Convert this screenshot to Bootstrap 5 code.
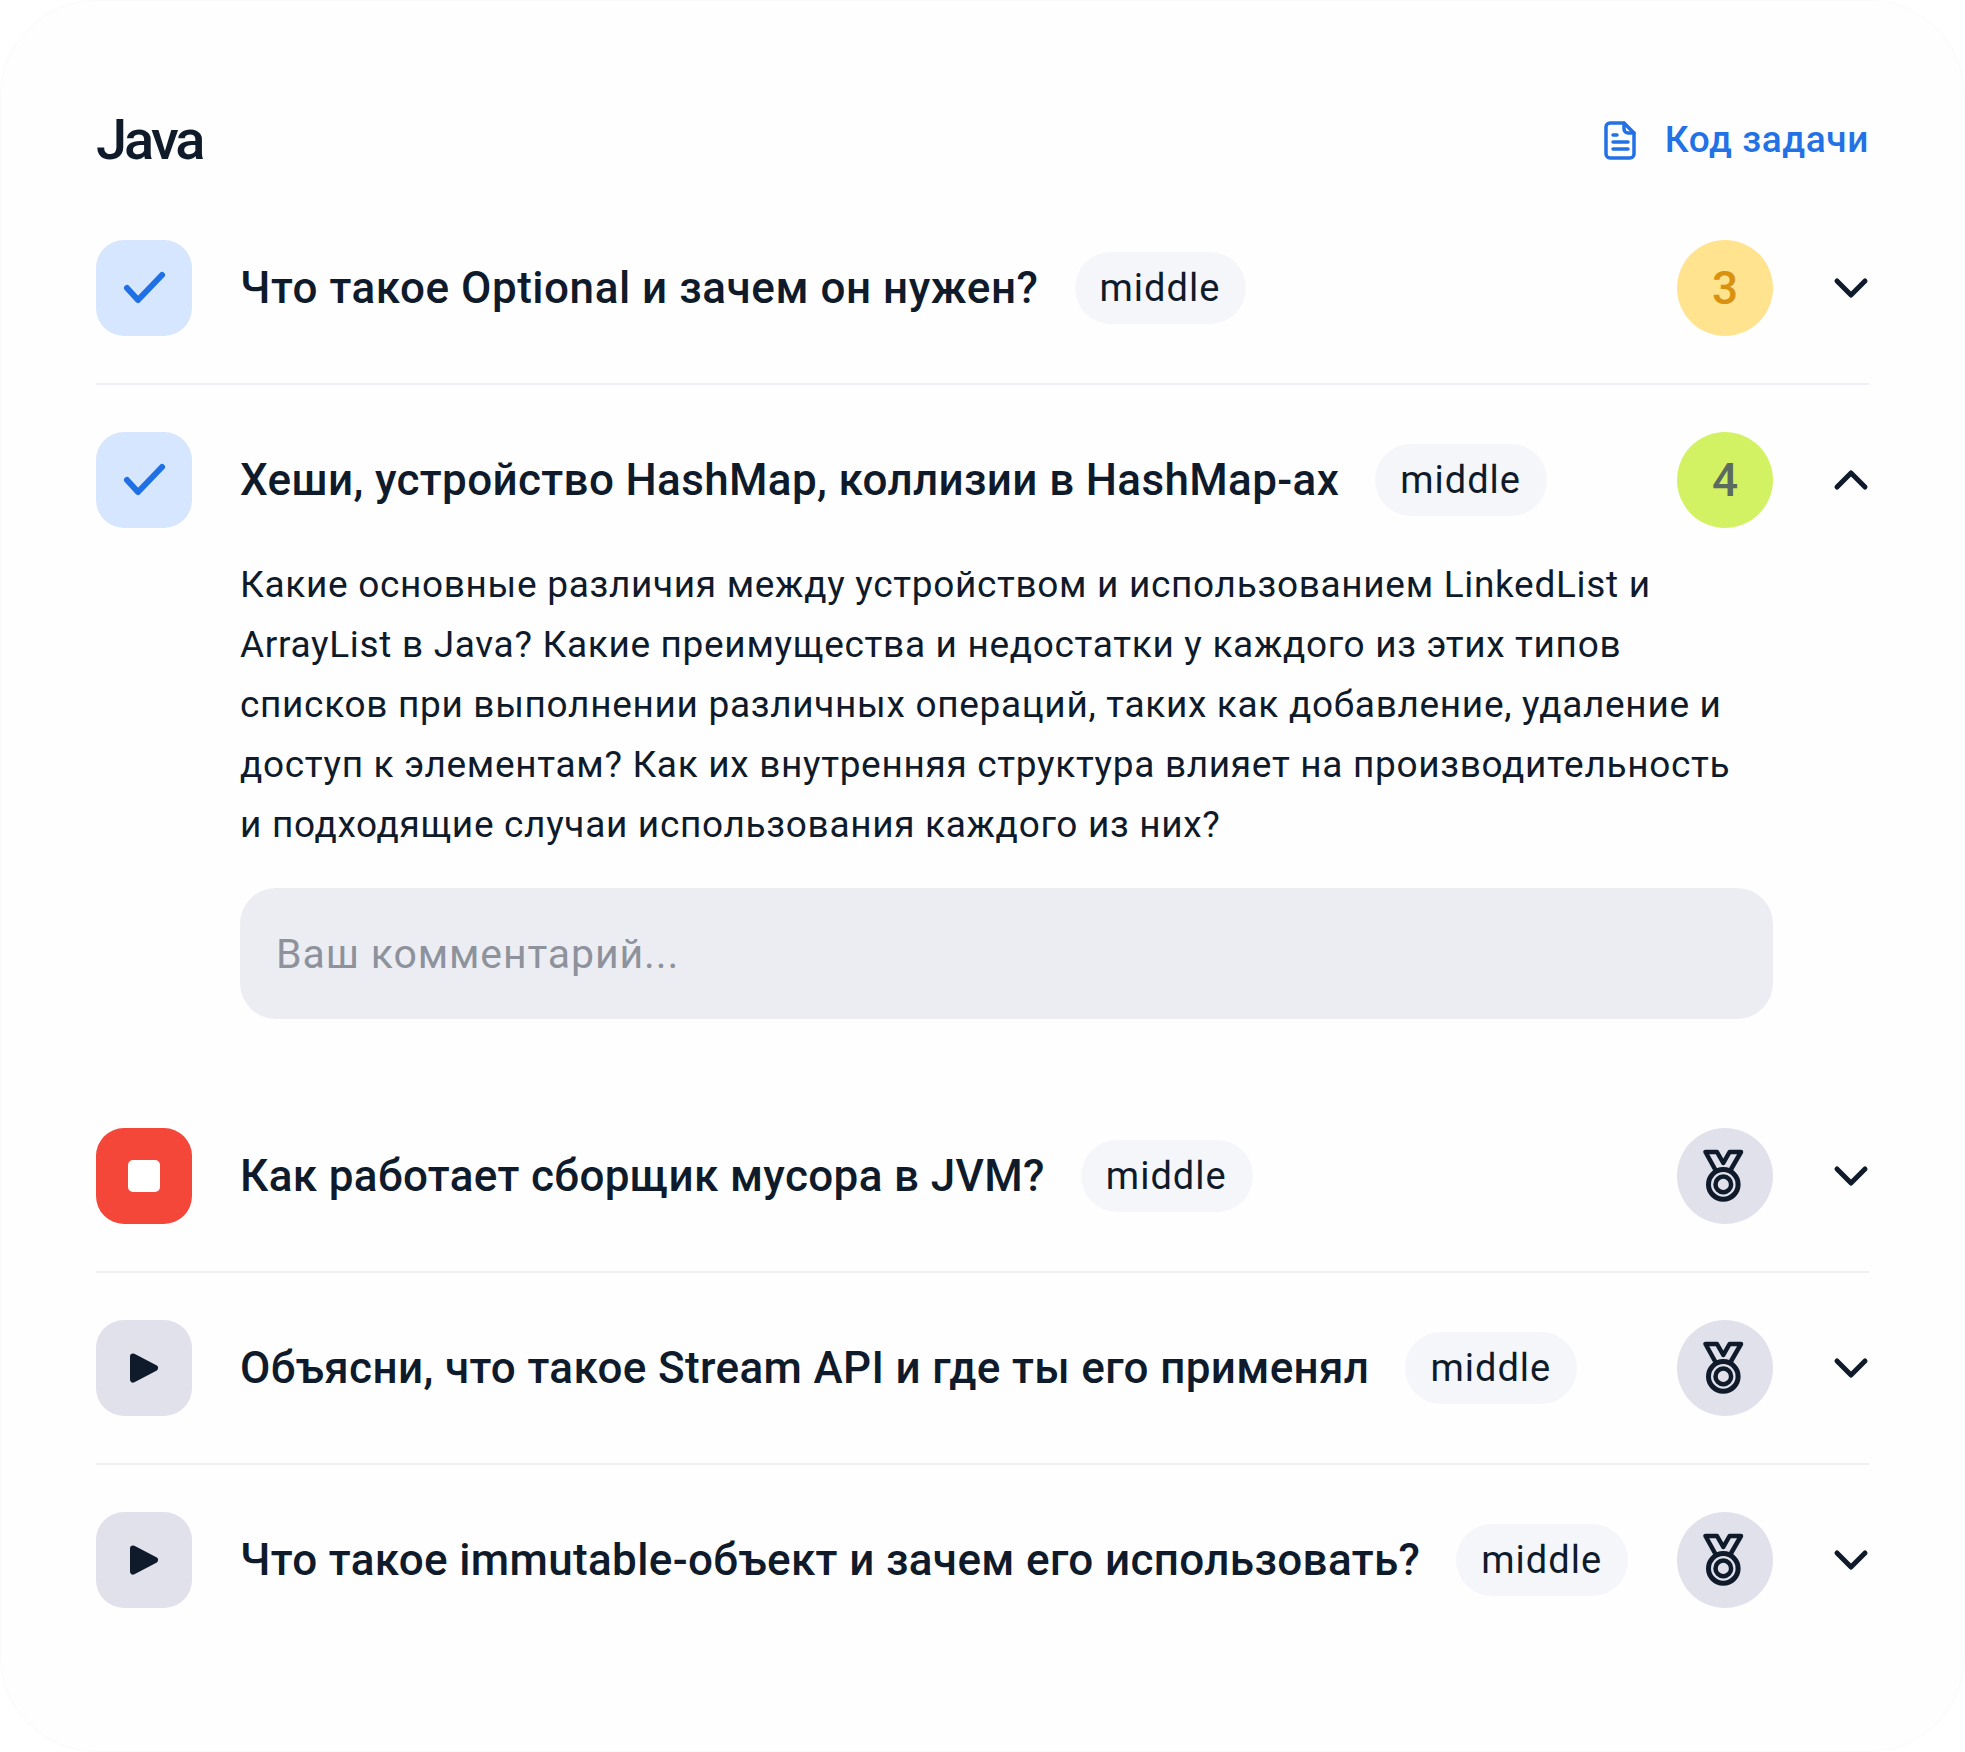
<!DOCTYPE html>
<html lang="ru">
<head>
<meta charset="utf-8">
<title>Java</title>
<link rel="stylesheet" href="https://cdn.jsdelivr.net/npm/bootstrap@5.3.0/dist/css/bootstrap.min.css">
<style>
body { background: #fff; font-family: Roboto, "Noto Sans", sans-serif; color: #0f1b2a; }
.sheet { height: 1752px; padding: 95px 95px 0; background: #fefefe; border: 1px solid #fafafa; border-radius: 96px; }
.sheet-head { height: 88px; margin-bottom: 56px; }
.sheet-title { font-size: 56px; font-weight: 500; letter-spacing: -3px; line-height: 88px; margin: 0; color: #0f1b2a; }
.code-link { color: #2272e6; font-size: 37px; font-weight: 500; letter-spacing: .6px; text-decoration: none; gap: 29px; }
.task-row { height: 96px; }
.task-sep { border-bottom: 2px solid #eff0f5; padding-bottom: 47px; margin-bottom: 47px; }
.task-last-open { margin-bottom: 109px; }
.state { width: 96px; height: 96px; border-radius: 28px; flex: none; margin-right: 48px; }
.state-done { background: #d6e6ff; }
.state-stop { background: #f44639; }
.state-play { background: #e0e1ea; }
.task-name { font-size: 44px; font-weight: 500; letter-spacing: .36px; margin: 0; line-height: 56px; white-space: nowrap; }
.task-name-wide { letter-spacing: .54px; }
.lvl { background: #f4f6f9; border-radius: 36px; height: 72px; padding: 0 26px 0 25px; font-size: 38px; letter-spacing: 1px; margin-left: 36px; flex: none; }
.score { width: 96px; height: 96px; border-radius: 50%; flex: none; font-size: 46px; font-weight: 500; }
.score-3 { background: #ffe38f; color: #d9920f; }
.score-4 { background: #d3f263; color: #5c6b5f; }
.score-none { background: #e0e1ea; }
.toggle { margin-left: 60px; flex: none; width: 36px; }
.task-body { margin: 27px 96px 0 144px; }
.task-text { font-size: 37px; letter-spacing: .68px; line-height: 60px; margin: 0 0 33px; }
.task-note { height: 131px; border: 0; border-radius: 36px; background: #ecedf3; padding: 0 36px; font-size: 41px; letter-spacing: .9px; color: #0f1b2a; }
.task-note::placeholder { color: #8d929c; opacity: 1; }
</style>
</head>
<body class="m-0">
<svg width="0" height="0" class="d-block position-absolute">
  <defs>
    <symbol id="i-check" viewBox="0 0 96 96"><path d="M31 48l11 12 24-25" fill="none" stroke="#1f6fe5" stroke-width="6" stroke-linecap="round" stroke-linejoin="round"/></symbol>
    <symbol id="i-stop" viewBox="0 0 96 96"><rect x="32" y="32" width="32" height="32" rx="5" fill="#fff"/></symbol>
    <symbol id="i-play" viewBox="0 0 96 96"><path d="M37 36.500L59 48 37 59.500z" fill="#0f1b2a" stroke="#0f1b2a" stroke-width="6" stroke-linejoin="round"/></symbol>
    <symbol id="i-medal" viewBox="0 0 96 96">
      <g fill="none" stroke="#0f1b2a" stroke-linejoin="round" stroke-linecap="round">
        <circle cx="46.300" cy="56.400" r="14.800" stroke-width="5"/>
        <circle cx="46.300" cy="56.400" r="7.800" stroke-width="4.500"/>
        <path d="M28.500 24H40l6.300 11 6.300-11H64L53 43M28.500 24L39 43" stroke-width="4.500"/>
      </g>
    </symbol>
    <symbol id="i-down" viewBox="0 0 36 36"><path d="M4 11l14 14 14-14" fill="none" stroke="#0f1b2a" stroke-width="5" stroke-linecap="round" stroke-linejoin="round"/></symbol>
    <symbol id="i-up" viewBox="0 0 36 36"><path d="M4 25l14-14 14 14" fill="none" stroke="#0f1b2a" stroke-width="5" stroke-linecap="round" stroke-linejoin="round"/></symbol>
  </defs>
</svg>
<main class="sheet">
  <header class="sheet-head d-flex align-items-center justify-content-between">
    <h1 class="sheet-title">Java</h1>
    <a href="#" class="code-link d-flex align-items-center">
      <svg width="32" height="39" viewBox="0 0 32 39" fill="none" stroke="#2272e6" stroke-width="3.500" stroke-linecap="round" stroke-linejoin="round">
        <path d="M6 2h14l10 10v21a4 4 0 0 1-4 4H6a4 4 0 0 1-4-4V6a4 4 0 0 1 4-4z"/>
        <path d="M20 2v6a4 4 0 0 0 4 4h6"/>
        <path d="M9 14h4M9 21h15M9 28h15"/>
      </svg>
      Код задачи
    </a>
  </header>

  <section class="task-sep">
    <div class="task-row d-flex align-items-center">
      <div class="state state-done"><svg width="96" height="96"><use href="#i-check"/></svg></div>
      <h2 class="task-name task-name-wide">Что такое Optional и зачем он нужен?</h2>
      <span class="lvl d-flex align-items-center">middle</span>
      <div class="score score-3 ms-auto d-flex align-items-center justify-content-center">3</div>
      <svg class="toggle" width="36" height="36"><use href="#i-down"/></svg>
    </div>
  </section>

  <section class="task-last-open">
    <div class="task-row d-flex align-items-center">
      <div class="state state-done"><svg width="96" height="96"><use href="#i-check"/></svg></div>
      <h2 class="task-name">Хеши, устройство HashMap, коллизии в HashMap-ах</h2>
      <span class="lvl d-flex align-items-center">middle</span>
      <div class="score score-4 ms-auto d-flex align-items-center justify-content-center">4</div>
      <svg class="toggle" width="36" height="36"><use href="#i-up"/></svg>
    </div>
    <div class="task-body">
      <p class="task-text">Какие основные различия между устройством и использованием LinkedList и<br>ArrayList в Java? Какие преимущества и недостатки у каждого из этих типов<br>списков при выполнении различных операций, таких как добавление, удаление и<br>доступ к элементам? Как их внутренняя структура влияет на производительность<br>и подходящие случаи использования каждого из них?</p>
      <input type="text" class="form-control task-note" placeholder="Ваш комментарий...">
    </div>
  </section>

  <section class="task-sep">
    <div class="task-row d-flex align-items-center">
      <div class="state state-stop"><svg width="96" height="96"><use href="#i-stop"/></svg></div>
      <h2 class="task-name">Как работает сборщик мусора в JVM?</h2>
      <span class="lvl d-flex align-items-center">middle</span>
      <div class="score score-none ms-auto"><svg width="96" height="96"><use href="#i-medal"/></svg></div>
      <svg class="toggle" width="36" height="36"><use href="#i-down"/></svg>
    </div>
  </section>

  <section class="task-sep">
    <div class="task-row d-flex align-items-center">
      <div class="state state-play"><svg width="96" height="96"><use href="#i-play"/></svg></div>
      <h2 class="task-name">Объясни, что такое Stream API и где ты его применял</h2>
      <span class="lvl d-flex align-items-center">middle</span>
      <div class="score score-none ms-auto"><svg width="96" height="96"><use href="#i-medal"/></svg></div>
      <svg class="toggle" width="36" height="36"><use href="#i-down"/></svg>
    </div>
  </section>

  <section>
    <div class="task-row d-flex align-items-center">
      <div class="state state-play"><svg width="96" height="96"><use href="#i-play"/></svg></div>
      <h2 class="task-name">Что такое immutable-объект и зачем его использовать?</h2>
      <span class="lvl d-flex align-items-center">middle</span>
      <div class="score score-none ms-auto"><svg width="96" height="96"><use href="#i-medal"/></svg></div>
      <svg class="toggle" width="36" height="36"><use href="#i-down"/></svg>
    </div>
  </section>
</main>
<script src="https://cdn.jsdelivr.net/npm/bootstrap@5.3.0/dist/js/bootstrap.bundle.min.js"></script>
</body>
</html>
